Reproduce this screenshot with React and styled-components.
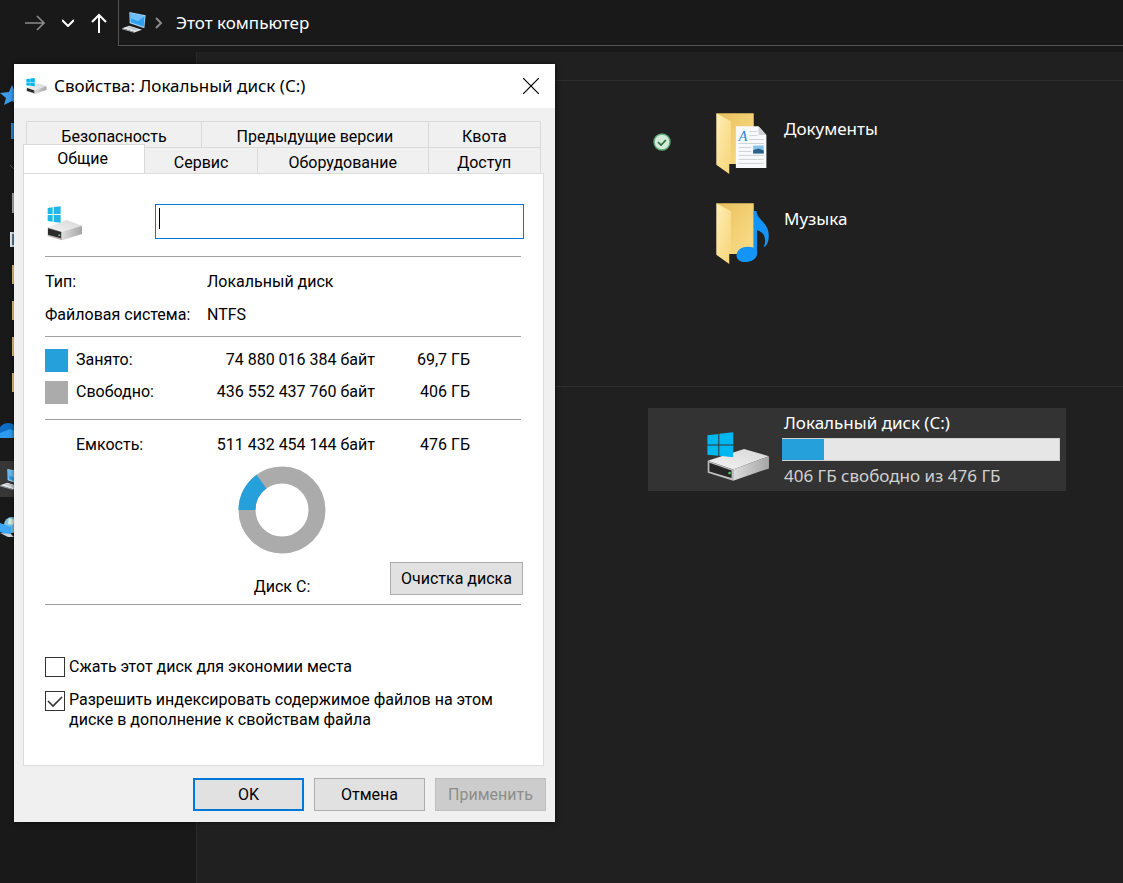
import React, { useState } from 'react';
import styled, { createGlobalStyle } from 'styled-components';

const shellFont = "'Noto Sans', 'Open Sans', sans-serif";
const dialogFont = "Roboto, 'Liberation Sans', Arial, sans-serif";

const GlobalStyle = createGlobalStyle`
  * {
    box-sizing: border-box;
  }

  body {
    margin: 0;
    background: #191919;
  }

  button, input {
    font: inherit;
    color: inherit;
    margin: 0;
  }
`;

/* ---------- explorer ---------- */

const Explorer = styled.div`
  position: relative;
  display: flex;
  flex-direction: column;
  min-height: 100vh;
  overflow: hidden;
  background: #191919;
  color: #fff;
  font: 17px/22px ${shellFont};
`;

const Toolbar = styled.header`
  display: flex;
  height: 46px;
  margin-bottom: 6px;
`;

const Nav = styled.nav`
  display: flex;
  align-items: center;
  gap: 17px;
  padding: 0 11px 0 25px;
`;

const NavButton = styled.button`
  display: flex;
  padding: 0;
  border: 0;
  background: none;
  color: ${({ disabled }) => (disabled ? '#8a8a8a' : '#fff')};
`;

const AddressBar = styled.div`
  flex: 1;
  display: flex;
  align-items: center;
  gap: 9px;
  padding-left: 3px;
  border-left: 1px solid #535353;
  border-bottom: 1px solid #535353;
`;

const Crumb = styled.a`
  margin-left: 4px;
  color: inherit;
  text-decoration: none;
`;

const Body = styled.div`
  flex: 1;
  display: flex;
`;

const Sidebar = styled.ul`
  width: 197px;
  margin: 0;
  padding: 25px 0 0;
  border-right: 1px solid #2b2b2b;
  list-style: none;
`;

const SidebarItem = styled.li`
  display: flex;
  align-items: center;
  height: 36px;
  margin-top: ${({ $root }) => ($root ? '12px' : '0')};
  padding-left: ${({ $nested }) => ($nested ? '10px' : '0')};
  background: ${({ $selected }) => ($selected ? '#373737' : 'transparent')};
`;

const Main = styled.main`
  flex: 1;
  padding-top: 28px;
  background: #202020;
`;

const Group = styled.section`
  display: grid;
  grid-template-columns: 418px 418px;
  grid-template-rows: repeat(${({ $rows }) => $rows}, 83px);
  gap: 7px 15px;
  padding: 21px 18px;
  border-top: 1px solid #2f2f2f;
`;

const Tile = styled.a`
  grid-column: 2;
  display: grid;
  grid-template-columns: 28px 94px 1fr;
  align-items: center;
  padding-right: 6px;
  background: ${({ $selected }) => ($selected ? '#333' : 'transparent')};
  color: inherit;
  text-decoration: none;
`;

const TileStatus = styled.span`
  display: flex;
  justify-content: center;
  padding-bottom: 3px;
`;

const TileIcon = styled.span`
  display: flex;
  align-items: flex-end;
  justify-content: flex-end;
  height: 63px;
`;

const TileText = styled.span`
  display: flex;
  flex-direction: column;
  gap: 4px;
  align-self: ${({ $top }) => ($top ? 'start' : 'center')};
  margin-left: 12px;
  padding-top: ${({ $top }) => ($top ? '16px' : '0')};
`;

const TileLabel = styled.span`
  padding-left: 2px;
  color: ${({ $muted }) => ($muted ? '#d0d0d0' : '#fff')};
`;

const UsageBar = styled.span`
  height: 23px;
  border: 1px solid #d0d0d0;
  border-left: 0;
  background: #e6e6e6;
`;

const UsageFill = styled.span`
  display: block;
  height: 100%;
  background: #26a0da;
`;

/* ---------- properties window ---------- */

const Dialog = styled.div`
  position: absolute;
  top: 64px;
  left: 14px;
  width: 541px;
  background: #f0f0f0;
  box-shadow: 0 0 5px rgba(0, 0, 0, 0.6);
  color: #000;
  font: 16px/20px ${dialogFont};
`;

const TitleBar = styled.header`
  display: flex;
  align-items: center;
  gap: 7px;
  height: 44px;
  padding: 0 16px 0 12px;
  background: #fff;
`;

const Title = styled.h1`
  flex: 1;
  margin: 0;
  font: 17px/22px ${shellFont};
`;

const CloseButton = styled.button`
  display: flex;
  padding: 0;
  border: 0;
  background: none;
`;

const Tabs = styled.div`
  padding: 13px 14px 0 9px;
`;

const TabRow = styled.div`
  display: flex;
  align-items: flex-end;
  height: 26px;
  margin-left: ${({ $back }) => ($back ? '3px' : '0')};
`;

const Tab = styled.button`
  flex: ${({ $width }) => $width} 1 0;
  height: 26px;
  padding: 4px 0 0;
  border: 1px solid #d9d9d9;
  border-width: 1px 1px 0 0;
  background: #f0f0f0;
  line-height: 20px;

  &:first-child {
    border-left-width: 1px;
  }

  &[aria-selected='true'] {
    height: 29px;
    padding: 0 3px 0 0;
    background: #fff;
  }
`;

const Panel = styled.div`
  margin: 0 11px 0 9px;
  padding: 30px 19px 35px 21px;
  border: 1px solid #dcdcdc;
  background: #fff;
`;

const Rule = styled.hr`
  margin: 0 3px 0 0;
  border: 0;
  border-top: 1px solid #a0a0a0;
`;

const NameRow = styled.div`
  display: flex;
  align-items: flex-end;
  justify-content: space-between;
  height: 52px;
  padding: 0 0 15px 2px;
`;

// the bar at the left is the caret of an empty, focused field
const NameInput = styled.input`
  width: 369px;
  height: 35px;
  margin-bottom: 2px;
  padding: 0 4px;
  border: 1px solid #0078d7;
  border-radius: 0;
  background: #fff;
  outline: 0;

  &:placeholder-shown {
    background: linear-gradient(#000, #000) 3px 3px / 1px 21px no-repeat #fff;
    caret-color: transparent;
  }
`;

const Facts = styled.dl`
  display: grid;
  grid-template-columns: 162px 1fr;
  gap: 13px 0;
  margin: 0;
  padding: 15px 0 11px;
  white-space: nowrap;

  dd {
    margin: 0;
  }
`;

const SizeTable = styled.table`
  width: 425px;
  border-collapse: collapse;
  table-layout: fixed;
  margin: ${({ $margin }) => $margin};

  th, td {
    height: 32px;
    padding: 0;
    text-align: right;
    font-weight: normal;
  }

  th {
    width: 131px;
    text-align: left;
  }

  td:last-child {
    width: 95px;
  }
`;

const SizeName = styled.span`
  display: flex;
  align-items: center;
  gap: 8px;
`;

const Swatch = styled.span`
  width: 23px;
  height: 23px;
  background: ${({ $color }) => $color};
`;

const ChartRow = styled.div`
  display: grid;
  grid-template-columns: 1fr 88px 1fr;
  align-items: end;
  margin-right: 5px;
  padding-bottom: 7px;
`;

const Chart = styled.figure`
  grid-column: 2;
  display: flex;
  flex-direction: column;
  align-items: center;
  gap: 23px;
  margin: 0;
`;

const PushButton = styled.button`
  width: ${({ $width }) => $width};
  height: 33px;
  padding: 0;
  border: ${({ $primary }) => ($primary ? '2px solid #0078d7' : '1px solid #adadad')};
  background: #e1e1e1;

  &:disabled {
    border-color: #bfbfbf;
    background: #ccc;
    color: #8d8d8d;
  }
`;

const CleanupButton = styled(PushButton)`
  justify-self: end;
  margin: 0 -4px 2px 0;
`;

const Options = styled.div`
  display: flex;
  flex-direction: column;
  gap: 13px;
  padding-top: 52px;
`;

const Option = styled.label`
  display: flex;
  align-items: flex-start;
  gap: 4px;
`;

const CheckBox = styled.input`
  appearance: none;
  flex: none;
  width: 20px;
  height: 20px;
  margin-top: ${({ $lines }) => ($lines > 1 ? '1px' : '0')};
  border: 1px solid #333;
  background: #fff;

  &:checked {
    background: #fff
      url("data:image/svg+xml,%3Csvg xmlns='http://www.w3.org/2000/svg' viewBox='0 0 18 18'%3E%3Cpath d='M2 9l5 5 9-9' fill='none' stroke='%23333' stroke-width='1.6'/%3E%3C/svg%3E")
      center / 18px no-repeat;
  }
`;

const Footer = styled.footer`
  display: flex;
  justify-content: flex-end;
  gap: 10px;
  padding: 12px 9px 11px;
`;

/* ---------- icons ---------- */

const DriveGradients = () => (
  <defs>
    <linearGradient id="driveTop" x1="0" y1="1" x2="1" y2="0">
      <stop offset="0" stopColor="#f4f4f4" />
      <stop offset="1" stopColor="#d6d6d6" />
    </linearGradient>
    <linearGradient id="driveSide" x1="0" y1="0" x2="1" y2="0">
      <stop offset="0" stopColor="#dcdcdc" />
      <stop offset="1" stopColor="#a6a6a6" />
    </linearGradient>
  </defs>
);

const DriveIcon = ({ width, height }) => (
  <svg width={width} height={height} viewBox="204 170 188 148">
    <DriveGradients />
    <path d="M205 257L315 221L390 243L282 283Z" fill="url(#driveTop)" />
    <path d="M282 283L390 243V280L282 317Z" fill="url(#driveSide)" />
    <path d="M205 257L282 283V317L205 293Z" fill="#bdbdbd" />
    <path d="M210 263L277 286V309L210 289Z" fill="#262626" />
    <circle cx="271" cy="294" r="4" fill="#4fd06a" />
    <path d="M204 180L237 176V208H204ZM240 175L282 171V208H240ZM204 211H237V242L204 239ZM240 211H282V246L240 242Z" fill="#00b7f0" />
  </svg>
);

const SmallDriveIcon = () => (
  <svg width="36" height="35" viewBox="17 15 108 105">
    <DriveGradients />
    <path d="M19 79L76 57L122 74L62 92Z" fill="url(#driveTop)" />
    <path d="M62 92L122 74V99L62 118Z" fill="url(#driveSide)" />
    <path d="M19 79L62 92V118L19 105Z" fill="#b4b4b4" />
    <path d="M20 82L59 93V112L20 101Z" fill="#2b2b2b" />
    <circle cx="54" cy="103" r="3" fill="#7fbf7f" />
    <path d="M19 21L34 19V39H19ZM37 18L58 16V39H37ZM19 42H34V62L19 60ZM37 42H58V65L37 63Z" fill="#1fb8e6" />
  </svg>
);

const ComputerIcon = ({ width = 24, height = 21 }) => (
  <svg width={width} height={height} viewBox="365 36 72 63">
    <path d="M387 36L436 46L432 85L388 70Z" fill="#a5d4f2" />
    <path d="M390 40L433 49L430 80L391 67Z" fill="#2f9ff0" />
    <path d="M390 40L433 49L413 64L391 55Z" fill="#6cbdf8" />
    <path d="M365 85L387 77L425 89L404 97Z" fill="#e4e8eb" />
    <path d="M365 85L404 97V99L365 88Z" fill="#9da3a8" />
    <path d="M379 83L389 79L416 88L406 92Z" fill="#c3c9cd" />
  </svg>
);

const FolderBase = () => (
  <>
    <defs>
      <linearGradient id="folderBack" x1="0" y1="0" x2="1" y2="1">
        <stop offset="0" stopColor="#e9c05c" />
        <stop offset="1" stopColor="#fbdf8b" />
      </linearGradient>
      <linearGradient id="folderFlap" x1="0" y1="0" x2="1" y2="1">
        <stop offset="0" stopColor="#ffeeb4" />
        <stop offset="1" stopColor="#f7d478" />
      </linearGradient>
    </defs>
    <path d="M260 72H372V225H280Z" fill="url(#folderBack)" />
    <path d="M259 72L303 96V225H298V255L259 227Z" fill="url(#folderFlap)" />
  </>
);

const DocumentsIcon = () => (
  <svg width="55" height="63" viewBox="256 68 164 190">
    <FolderBase />
    <path d="M318 111H386L410 137V237H318Z" fill="#f7f9fa" />
    <path d="M386 111V137H410Z" fill="#cdd3d8" />
    <path d="M359 127H383M359 139H383M359 151H402M326 163H402M326 175H364M326 187H364M326 199H402M326 211H402M326 223H402" stroke="#b9c0c6" strokeWidth="2" />
    <path d="M370 169H402V193H370Z" fill="#86c2ea" />
    <path d="M370 183L386 178L402 184V193H370Z" fill="#2c5f86" />
    <text x="326" y="154" fill="#2289d6" fontFamily="'Liberation Serif', serif" fontSize="44" fontStyle="italic">A</text>
  </svg>
);

const MusicIcon = () => (
  <svg width="55" height="63" viewBox="256 68 164 190">
    <FolderBase />
    <path d="M372 95H380C382 122 420 132 417 174C416 190 410 201 402 204C412 180 404 158 382 153V222C382 240 364 249 346 249C330 249 320 241 320 229C320 213 336 203 354 203C361 203 367 204 372 206Z" fill="#1494f6" />
  </svg>
);

const SyncedIcon = () => (
  <svg width="18" height="18" viewBox="0 0 18 18">
    <circle cx="9" cy="9" r="8" fill="#d5ebd9" stroke="#5fa878" strokeWidth="1.4" />
    <path d="M5 9l3 3 5-5" fill="none" stroke="#1f6b3a" strokeWidth="1.6" />
  </svg>
);

const UsageChart = ({ used }) => (
  <svg width="88" height="88" viewBox="0 0 88 88">
    <g fill="none" strokeWidth="17" transform="rotate(180 44 44)">
      <circle cx="44" cy="44" r="35" stroke="#ababab" />
      <circle cx="44" cy="44" r="35" stroke="#26a0da" pathLength="100" strokeDasharray={`${used} ${100 - used}`} />
    </g>
  </svg>
);

const sidebarIcons = {
  star: <path d="M12 0L15 7L22 8L17 13L18 20L12 16L4 20L6 13L0 8L9 7Z" fill="#3d9be9" />,
  desktop: <path d="M1 2H20V18H1Z" fill="#1c8be6" />,
  arrow: <path d="M0 8L5 13L10 8" fill="none" stroke="#555" />,
  page: <path d="M2 0H18V20H2Z" fill="#b8b8b8" />,
  picture: (
    <>
      <path d="M0 3H20V18H0Z" fill="#e8eef2" />
      <path d="M2 5H18V16H2Z" fill="#5f7f96" />
    </>
  ),
  folder: <path d="M2 0H18V19H2Z" fill="#f3d27c" />,
  cloud: (
    <>
      <path d="M0 6C5 0 13 1 17 7L20 9V16H0Z" fill="#0f6cc4" />
      <path d="M0 12L10 8L20 12V17H0Z" fill="#2d9bf0" />
    </>
  ),
  network: (
    <>
      <circle cx="12" cy="8" r="8" fill="#7cc3e6" />
      <path d="M9 1L15 3L13 8L8 7Z" fill="#d9efe0" />
      <path d="M0 6L11 10V19L0 15Z" fill="#3da9f5" />
      <path d="M0 16L8 20H14L11 17Z" fill="#cfd8dd" />
    </>
  ),
};

const SidebarIcon = ({ name }) =>
  name === 'computer' ? (
    <ComputerIcon />
  ) : (
    <svg width="20" height="20" viewBox="0 0 20 20">
      {sidebarIcons[name]}
    </svg>
  );

/* ---------- data ---------- */

const sidebar = [
  { icon: 'star' },
  { icon: 'desktop', nested: true },
  { icon: 'arrow', nested: true },
  { icon: 'page', nested: true },
  { icon: 'picture', nested: true },
  { icon: 'folder', nested: true },
  { icon: 'folder', nested: true },
  { icon: 'folder', nested: true },
  { icon: 'folder', nested: true },
  { icon: 'cloud', root: true },
  { icon: 'computer', root: true, selected: true },
  { icon: 'network', root: true },
];

const backTabs = [
  { label: 'Безопасность', width: 175 },
  { label: 'Предыдущие версии', width: 227 },
  { label: 'Квота', width: 112 },
];

const frontTabs = [
  { label: 'Общие', width: 119 },
  { label: 'Сервис', width: 113 },
  { label: 'Оборудование', width: 172 },
  { label: 'Доступ', width: 113 },
];

const usedPercent = 15;

const SizeRow = ({ color, name, bytes, size }) => (
  <tr>
    <th scope="row">
      <SizeName>
        <Swatch $color={color || 'transparent'} />
        {name}
      </SizeName>
    </th>
    <td>{bytes}</td>
    <td>{size}</td>
  </tr>
);

const PropertiesDialog = () => {
  const [tab, setTab] = useState('Общие');
  const [label, setLabel] = useState('');
  const [compress, setCompress] = useState(false);
  const [index, setIndex] = useState(true);

  const renderTab = ({ label: name, width }) => (
    <Tab key={name} type="button" role="tab" aria-selected={tab === name} $width={width} onClick={() => setTab(name)}>
      {name}
    </Tab>
  );

  return (
    <Dialog role="dialog" aria-labelledby="dialog-title">
      <TitleBar>
        <DriveIcon width={21} height={16} />
        <Title id="dialog-title">Свойства: Локальный диск (C:)</Title>
        <CloseButton type="button" aria-label="Закрыть">
          <svg width="16" height="16" viewBox="0 0 16 16">
            <path d="M0 0L16 16M16 0L0 16" stroke="#000" strokeWidth="1.2" />
          </svg>
        </CloseButton>
      </TitleBar>

      <Tabs role="tablist">
        <TabRow $back>{backTabs.map(renderTab)}</TabRow>
        <TabRow>{frontTabs.map(renderTab)}</TabRow>
      </Tabs>

      <Panel role="tabpanel">
        <NameRow>
          <SmallDriveIcon />
          <NameInput
            aria-label="Метка тома"
            placeholder=" "
            autoFocus
            value={label}
            onChange={(e) => setLabel(e.target.value)}
          />
        </NameRow>
        <Rule />
        <Facts>
          <dt>Тип:</dt>
          <dd>Локальный диск</dd>
          <dt>Файловая система:</dt>
          <dd>NTFS</dd>
        </Facts>
        <Rule />
        <SizeTable $margin="7px 0 11px">
          <tbody>
            <SizeRow color="#26a0da" name="Занято:" bytes="74 880 016 384 байт" size="69,7 ГБ" />
            <SizeRow color="#ababab" name="Свободно:" bytes="436 552 437 760 байт" size="406 ГБ" />
          </tbody>
        </SizeTable>
        <Rule />
        <SizeTable $margin="9px 0 5px">
          <tbody>
            <SizeRow name="Емкость:" bytes="511 432 454 144 байт" size="476 ГБ" />
          </tbody>
        </SizeTable>
        <ChartRow>
          <Chart>
            <UsageChart used={usedPercent} />
            <figcaption>Диск C:</figcaption>
          </Chart>
          <CleanupButton type="button" $width="133px">Очистка диска</CleanupButton>
        </ChartRow>
        <Rule />
        <Options>
          <Option>
            <CheckBox type="checkbox" checked={compress} onChange={() => setCompress(!compress)} />
            Сжать этот диск для экономии места
          </Option>
          <Option>
            <CheckBox type="checkbox" $lines={2} checked={index} onChange={() => setIndex(!index)} />
            Разрешить индексировать содержимое файлов на этом диске в дополнение к свойствам файла
          </Option>
        </Options>
      </Panel>

      <Footer>
        <PushButton type="button" $width="111px" $primary>OK</PushButton>
        <PushButton type="button" $width="111px">Отмена</PushButton>
        <PushButton type="button" $width="111px" disabled>Применить</PushButton>
      </Footer>
    </Dialog>
  );
};

const App = () => (
  <>
    <GlobalStyle />
    <Explorer>
      <Toolbar>
        <Nav>
          <NavButton type="button" disabled aria-label="Вперед">
            <svg width="20" height="16" viewBox="0 0 20 16" fill="none" stroke="currentColor" strokeWidth="1.6">
              <path d="M0 8H19M12 1L19 8L12 15" />
            </svg>
          </NavButton>
          <NavButton type="button" aria-label="Последние расположения">
            <svg width="12" height="8" viewBox="0 0 12 8" fill="none" stroke="currentColor" strokeWidth="2">
              <path d="M0 1L6 7L12 1" />
            </svg>
          </NavButton>
          <NavButton type="button" aria-label="Вверх">
            <svg width="16" height="20" viewBox="0 0 16 20" fill="none" stroke="currentColor" strokeWidth="2">
              <path d="M8 20V2M1 9L8 2L15 9" />
            </svg>
          </NavButton>
        </Nav>
        <AddressBar>
          <ComputerIcon />
          <svg width="8" height="12" viewBox="0 0 8 12" fill="none" stroke="#8a8a8a" strokeWidth="2">
            <path d="M1 1L6 6L1 11" />
          </svg>
          <Crumb href="#">Этот компьютер</Crumb>
        </AddressBar>
      </Toolbar>

      <Body>
        <Sidebar>
          {sidebar.map(({ icon, nested, root, selected }, i) => (
            <SidebarItem key={i} $nested={nested} $root={root} $selected={selected}>
              <SidebarIcon name={icon} />
            </SidebarItem>
          ))}
        </Sidebar>
        <Main>
          <Group $rows={3}>
            <Tile href="#">
              <TileStatus><SyncedIcon /></TileStatus>
              <TileIcon><DocumentsIcon /></TileIcon>
              <TileText $top>
                <TileLabel>Документы</TileLabel>
              </TileText>
            </Tile>
            <Tile href="#">
              <TileStatus />
              <TileIcon><MusicIcon /></TileIcon>
              <TileText $top>
                <TileLabel>Музыка</TileLabel>
              </TileText>
            </Tile>
          </Group>
          <Group $rows={1}>
            <Tile href="#" $selected>
              <TileStatus />
              <TileIcon><DriveIcon width={63} height={49} /></TileIcon>
              <TileText>
                <TileLabel>Локальный диск (C:)</TileLabel>
                <UsageBar>
                  <UsageFill style={{ width: `${usedPercent}%` }} />
                </UsageBar>
                <TileLabel $muted>406 ГБ свободно из 476 ГБ</TileLabel>
              </TileText>
            </Tile>
          </Group>
        </Main>
      </Body>
    </Explorer>
    <PropertiesDialog />
  </>
);

export default App;
